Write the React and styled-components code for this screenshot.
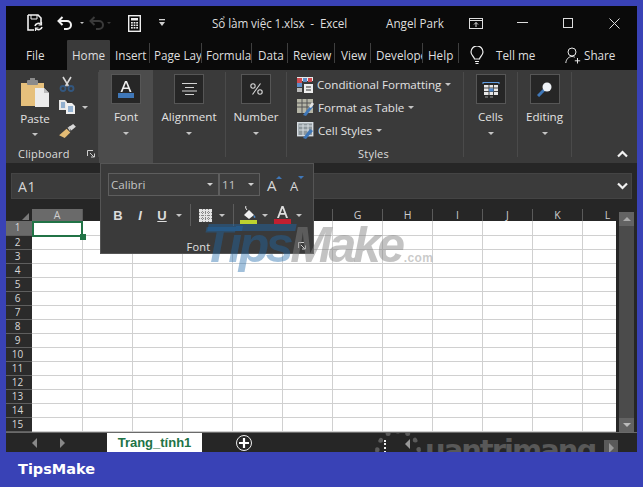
import React from "react";
import styled, { createGlobalStyle } from "styled-components";

const Global = createGlobalStyle`
  html, body { margin: 0; padding: 0; background: #3942b6; }
  body { width: 643px; height: 487px; overflow: hidden; font-family: "Open Sans", "Noto Sans", sans-serif; }
  * { box-sizing: border-box; }
`;

const Page = styled.div`
  width: 643px; height: 487px; background: #3942b6; padding: 6px 6px 0;
  display: flex; flex-direction: column;
`;
const Window = styled.div`
  position: relative; width: 631px; height: 446px; background: #262626;
  display: flex; flex-direction: column; color: #e6e6e6; overflow: hidden;
`;
const Circuit = styled.svg`position: absolute; left: 0; top: 0; pointer-events: none;`;
const TitleBar = styled.div`
  position: relative; height: 34px; flex: none; background: #0a0a0a; display: flex; align-items: center;
  font-size: 11.7px; color: #dedede;
`;
const Qat = styled.div`display: flex; flex: none; align-items: center; position: relative; padding-left: 21px; width: 206px;`;
const QatSlot = styled.div`width: ${p => p.$w}px; height: 20px; display: flex; align-items: center; justify-content: ${p => p.$j || "flex-start"};`;
const Title = styled.div`position: relative; flex: none; width: 174px; letter-spacing: -0.1px; white-space: pre;`;
const WinUser = styled.div`position: relative; flex: none; width: 83px;`;
const WinButtons = styled.div`position: relative; flex: none; display: flex; align-items: center;`;
const WinBtn = styled.div`width: 46px; display: flex; justify-content: center; align-items: center; margin-left: ${p => p.$m || 0}px;`;

const Tabs = styled.div`
  position: relative; height: 30px; flex: none; background: #0a0a0a; display: flex; align-items: stretch; font-size: 11.7px; color: #dedede;
`;
const FileTab = styled.div`width: 61px; padding-left: 20px; display: flex; align-items: center;`;
const HomeTab = styled.div`width: 43px; background: #3a3a3a; display: flex; align-items: center; justify-content: center; border-radius: 1px 1px 0 0;`;
const TabItem = styled.div`
  width: ${p => p.$w}px; overflow: hidden; white-space: nowrap; padding-left: ${p => p.$p || 4}px;
  display: flex; align-items: center; position: relative;
  &::after { content: ""; position: absolute; right: 0; top: 3px; bottom: 7px; width: 1px; background: #3f3f3f; }
`;
const TellMe = styled.div`display: flex; align-items: center; margin-left: 11px; width: 95px; gap: 12px;`;
const Share = styled.div`display: flex; align-items: center; gap: 3px;`;

const Ribbon = styled.div`height: 93px; flex: none; background: #3a3a3a; display: flex; align-items: stretch; font-size: 11.6px; color: #e2e2e2;`;
const Sep = styled.div`width: 1px; flex: none; background: #4a4a4a; margin: 2px 0 6px;`;
const Group = styled.div`
  width: ${p => p.$w}px; flex: none; display: flex; flex-direction: column; align-items: center;
  background: ${p => p.$active ? "#4c4c4c" : "transparent"};
`;
const IconBox = styled.div`
  width: 30px; height: 30px; margin-top: 4px; background: #262626; border: 1px solid #565656;
  display: flex; align-items: center; justify-content: center;
`;
const BigLabel = styled.div`height: 18px; line-height: 18px; margin-top: 4px;`;
const Caret = styled.span`
  display: inline-block; width: 0; height: 0; flex: none;
  border-left: ${p => p.$s || 3}px solid transparent; border-right: ${p => p.$s || 3}px solid transparent;
  border-top: ${p => p.$s || 3}px solid ${p => p.$c || "#c4c4c4"};
`;
const CaretRow = styled.div`height: 10px; display: flex; align-items: center; justify-content: center; margin-top: ${p => p.$m ?? 2}px;`;
const ClipGroup = styled.div`width: 92px; flex: none; display: flex; flex-direction: column;`;
const ClipBody = styled.div`flex: 1; min-height: 0; display: flex; padding-left: 6px;`;
const PasteCol = styled.div`width: 46px; display: flex; flex-direction: column; align-items: center; padding-top: 8px;`;
const PasteLabel = styled.div`height: 18px; line-height: 18px; margin-top: 2px;`;
const SmallCol = styled.div`display: flex; flex-direction: column; padding-top: 2px; margin-left: 1px;`;
const SmallRow = styled.div`height: 23.5px; display: flex; align-items: center; gap: 7px;`;
const GroupLabel = styled.div`height: 18px; flex: none; line-height: 18px; font-size: 11px; letter-spacing: .2px; display: flex; align-items: center; color: #dcdcdc;`;
const ClipLabel = styled(GroupLabel)`padding-left: 12px; gap: 17px;`;
const StyleGroup = styled.div`width: 176px; flex: none; display: flex; flex-direction: column;`;
const StyleList = styled.div`flex: 1; padding: 3px 0 0 10px;`;
const StyleItem = styled.div`height: 23px; display: flex; align-items: center; gap: 4px; white-space: nowrap;`;
const StyleCaption = styled(GroupLabel)`justify-content: center; margin-left: -3px;`;
const Rest = styled.div`flex: 1; display: flex; align-items: flex-end; justify-content: flex-end; padding: 0 9px 5px 0;`;

const Band = styled.div`height: 10px; flex: none; background: #262626;`;
const FormulaBar = styled.div`
  height: 26px; flex: none; margin: 0 5px; background: #3b3b3b; border: 1px solid #444;
  display: flex; align-items: center; justify-content: space-between; padding: 0 3px 0 6px;
  font-size: 14px; letter-spacing: .6px; color: #d6d6d6;
`;
const Sheet = styled.div`position: relative; flex: none; margin-top: 10px; height: 223px; display: flex;`;
const SheetMain = styled.div`width: 610px; display: flex; flex-direction: column;`;
const HeaderRow = styled.div`height: 12px; display: flex; flex: none; font-size: 10.5px; color: #cfcfcf;`;
const Corner = styled.div`width: 26px; flex: none; display: flex; align-items: flex-end; justify-content: flex-end; padding: 0 3px 1px 0;`;
const ColHeads = styled.div`width: 584px; display: flex; overflow: hidden;`;
const ColHead = styled.div`
  width: 50px; flex: none; text-align: center; line-height: 12px; border-right: 1px solid #5a5a5a;
  background: ${p => p.$on ? "#6a6a6a" : "transparent"};
  &:first-child { width: 51px; }
`;
const Row = styled.div`height: ${p => p.$first ? 15 : 14}px; display: flex; flex: none;`;
const RowHead = styled.div`
  width: 26px; flex: none; text-align: center; font-size: 10px; line-height: 13px; padding-right: 3px;
  border-bottom: 1px solid #5f5f5f; color: #d8d8d8; background: ${p => p.$on ? "#6a6a6a" : "#2b2b2b"};
`;
const Cells = styled.div`width: 584px; display: flex; overflow: hidden; background: #fff;`;
const Cell = styled.div`
  width: 50px; flex: none; border-right: 1px solid #d0d0d0; border-bottom: 1px solid #d0d0d0;
  &:first-child { width: 51px; }
`;
const Selected = styled.div`
  position: absolute; left: 26px; top: 12px; width: 51px; height: 16px; border: 2px solid #217346; z-index: 2;
`;
const Handle = styled.div`position: absolute; right: -5px; bottom: -5px; width: 6px; height: 6px; background: #217346;`;
const Scrollbar = styled.div`width: 15px; margin: 3px 0 0 3px; flex: none; display: flex; flex-direction: column; background: #4b4b4b;`;
const ScrollBtn = styled.div`height: 14px; flex: none; background: #636363; display: flex; align-items: center; justify-content: center;`;
const ScrollTrack = styled.div`flex: 1;`;
const ArrowUp = styled.span`width: 0; height: 0; border: 4px solid transparent; border-top: 0; border-bottom: 4px solid #aaa;`;
const ArrowDown = styled.span`width: 0; height: 0; border: 4px solid transparent; border-bottom: 0; border-top: 4px solid #bbb;`;

const SheetBar = styled.div`
  position: relative; flex: 1; background: #262626; border-top: 1px solid #6a6a6a; display: flex; align-items: center; overflow: hidden;
`;
const NavGroup = styled.div`width: 101px; padding-left: 26px; display: flex; gap: 23px; align-items: center;`;
const ArrowLeft = styled.span`width: 0; height: 0; flex: none; border: 5px solid transparent; border-left: 0; border-right: 5px solid ${p => p.$c || "#888"};`;
const ArrowRight = styled.span`width: 0; height: 0; flex: none; border: 5px solid transparent; border-right: 0; border-left: 5px solid ${p => p.$c || "#888"};`;
const SheetTab = styled.div`
  width: 95px; height: 21px; margin-top: -1px; background: #fff; color: #217346; font-weight: 700; font-size: 13px;
  display: flex; align-items: center; justify-content: center; font-family: "Liberation Sans", sans-serif;
`;
const AddSheet = styled.div`
  width: 16px; height: 16px; margin-left: 34px; border: 1.5px solid #eee; border-radius: 50%; color: #fff;
  display: flex; align-items: center; justify-content: center;
`;
const QWater = styled.div`
  position: absolute; left: 369px; top: 1px; width: 240px; height: 30px; display: flex; align-items: flex-start;
  color: #585858; font: 700 29px/32px "DejaVu Sans", sans-serif; letter-spacing: -2px;
`;
const QRing = styled.div`width: 46px; height: 46px; margin: -5px 4px 0 0; border: 5px dotted #5b5b5b; border-radius: 50%; flex: none;`;
const Dots = styled.div`position: absolute; left: 378px; top: 7px; width: 2px; height: 13px; border-left: 2px dotted #eee;`;
const BarArrow = styled.div`position: absolute; top: ${p => p.$t}px; left: ${p => p.$l}px; width: 14px; height: 15px; background: ${p => p.$bg || "#5a5a5a"}; display: flex; align-items: center; justify-content: center;`;

const Panel = styled.div`
  position: absolute; left: 94px; top: 157px; width: 214px; height: 91px; background: #3a3a3a; border: 1px solid #555;
  display: flex; flex-direction: column; z-index: 5; font-size: 11.6px; color: #e0e0e0;
`;
const PanelRow1 = styled.div`display: flex; align-items: center; margin: 9px 0 0 7px;`;
const FontSelect = styled.div`
  height: 23px; width: ${p => p.$w}px; border: 1px solid #5e5e5e; display: flex; align-items: center; justify-content: space-between;
  padding: 0 5px 0 2px; color: #c4c4c4; margin-right: ${p => p.$m || 0}px; background: #3e3e3e;
`;
const SizeBtn = styled.div`width: 22px; display: flex; justify-content: center; position: relative;`;
const PanelRow2 = styled.div`display: flex; align-items: center; height: 24px; margin: 7px 0 0 6px;`;
const Tool = styled.div`
  width: ${p => p.$w}px; height: 24px; flex: none; display: flex; align-items: center; justify-content: center;
  font: ${p => p.$font || "700 13px"} "Liberation Sans", sans-serif; color: #dcdcdc; text-decoration: ${p => p.$u ? "underline" : "none"};
`;
const ToolSep = styled.div`width: 10px; height: 22px; flex: none; display: flex; justify-content: center; &::before { content: ""; width: 1px; background: #5c5c5c; }`;
const PanelFoot = styled.div`margin-top: auto; height: 14px; display: flex; align-items: center; margin-bottom: 0;`;
const PanelCaption = styled.div`width: 195px; text-align: center; font-size: 11px; letter-spacing: .2px;`;
const Launcher = styled.div`margin-left: 2px; display: flex;`;

const Water = styled.div`
  position: absolute; left: 196px; top: 209px; z-index: 7; pointer-events: none; white-space: nowrap;
  font: italic 700 50px/60px "Liberation Sans", sans-serif; letter-spacing: -3.4px;
  display: flex; align-items: baseline;
`;
const WaterBar = styled.div`position: absolute; left: 6px; top: 9px; width: 88px; height: 7px; background: rgba(31,104,170,.45); transform: skewX(-12deg);`;
const WaterTips = styled.span`color: rgba(31,104,170,.42);`;
const WaterMake = styled.span`color: rgba(130,130,130,.48);`;
const WaterCom = styled.span`color: rgba(150,150,150,.5); font: 700 12px "Liberation Sans", sans-serif; letter-spacing: .4px; margin-left: 2px;`;

const Footer = styled.div`flex: 1; display: flex; align-items: center; padding: 0 0 2px 12px; color: #fff; font: 700 14.5px "DejaVu Sans", sans-serif;`;

/* icons */
const Save = () => (
  <svg width="17" height="18" viewBox="0 0 17 18" fill="none" stroke="#f2f2f2" strokeWidth="1.6">
    <path d="M1 1h10l3 3v5M1 1v15h6" />
    <path d="M4 1v4h6V1" strokeWidth="1" />
    <path d="M8 12a3.5 3.5 0 0 1 6-1.5M15 13a3.5 3.5 0 0 1-6 1.5" />
    <path d="M14.5 8v3h-3M8.5 17v-3h3" strokeWidth="1.2" />
  </svg>
);
const Undo = ({ c }) => (
  <svg width="16" height="14" viewBox="0 0 16 14" fill="none" stroke={c} strokeWidth="2">
    <path d="M5.5 1 1.5 5l4 4" /><path d="M2 5h8a4 4 0 0 1 4 4 4 4 0 0 1-4 4H7" />
  </svg>
);
const Calc = () => (
  <svg width="13" height="17" viewBox="0 0 13 17">
    <rect x=".7" y=".7" width="11.6" height="15.6" fill="none" stroke="#eee" strokeWidth="1.4" />
    <rect x="3" y="3" width="7" height="2.5" fill="#eee" />
    {[7, 9.5, 12].flatMap(y => [3, 5.6, 8.2].map(x => <rect key={x + "" + y} x={x} y={y} width="1.8" height="1.6" fill="#eee" />))}
  </svg>
);
const Customize = () => (
  <svg width="8" height="8" viewBox="0 0 8 8" fill="#cfcfcf"><rect x="1" y="0" width="6" height="1.3" /><path d="M1 3h6L4 7z" /></svg>
);
const RibbonDisplay = () => (
  <svg width="14" height="11" viewBox="0 0 14 11" fill="none" stroke="#ddd"><rect x=".5" y=".5" width="13" height="10" /><path d="M.5 2.500h13M7 9V4.500M5 6.500l2-2 2 2" /></svg>
);
const Bulb = () => (
  <svg width="14" height="19" viewBox="0 0 14 19" fill="none" stroke="#eee" strokeWidth="1.2"><path d="M4.500 13c0-2-3.500-3.500-3.500-7a6 6 0 0 1 12 0c0 3.500-3.500 5-3.500 7z" /><path d="M5 15.500h4M5.500 17.500h3" /></svg>
);
const Person = () => (
  <svg width="16" height="17" viewBox="0 0 16 17" fill="none" stroke="#e6e6e6" strokeWidth="1"><circle cx="7" cy="5" r="4" /><path d="M.8 16c.4-4 3-6.500 6.200-6.500 1 0 2 .2 2.800.7M12.500 11v5.500M9.800 13.800h5.400" /></svg>
);
const Paste = () => (
  <svg width="30" height="30" viewBox="0 0 30 30">
    <path d="M1 5h23v23H1z" fill="#e6c07c" />
    <rect x="7" y="2" width="11" height="5" rx="1" fill="#8b8b8b" /><rect x="10" y="0" width="5" height="3" fill="#8b8b8b" />
    <path d="M15 10h9l5 5v14H15z" fill="#ececec" /><path d="M24 10v5h5" fill="#bdbdbd" />
  </svg>
);
const Cut = () => (
  <svg width="16" height="16" viewBox="0 0 16 16" fill="none">
    <path d="M4 1l6 10M12 1 6 11" stroke="#d8d8d8" strokeWidth="1.6" />
    <circle cx="4" cy="12.500" r="2.500" stroke="#33577f" strokeWidth="1.800" /><circle cx="12" cy="12.500" r="2.500" stroke="#33577f" strokeWidth="1.800" />
  </svg>
);
const Copy = () => (
  <svg width="16" height="14" viewBox="0 0 16 14">
    <path d="M0 0h6l2 2v8H0z" fill="#e8e8e8" /><path d="M2 3h4M2 5h4M2 7h4" stroke="#3a76b5" />
    <path d="M7 3h6l3 3v8H7z" fill="#f0f0f0" /><path d="M9 7h5M9 9h5M9 11h5" stroke="#3a76b5" />
  </svg>
);
const Painter = () => (
  <svg width="17" height="14" viewBox="0 0 18 15">
    <path d="M0 12 8 5l4 4-6 6z" fill="#e3bb75" /><path d="M9 4l3-2 2 2-2 2 0 2z" fill="#c8c8c8" /><path d="M11 3l4-3 3 3-5 4z" fill="#d9d9d9" />
  </svg>
);
const LauncherIcon = () => (
  <svg width="8" height="8" viewBox="0 0 8 8" fill="none" stroke="#cfcfcf"><path d="M.5 6V.5H6" /><path d="M3 3l4 4M4 7h3.500V3.500" /></svg>
);
const FontA = () => (
  <svg width="16" height="18" viewBox="0 0 16 18"><path d="M2.500 12 7 1h2l4.500 11h-1.900l-1.100-3H5.500l-1.100 3zM6.100 7.500h3.800L8 2.800z" fill="#eee" /><rect x="0" y="13" width="16" height="5" fill="#3f77b8" /></svg>
);
const Align = () => (
  <svg width="15" height="12" viewBox="0 0 15 12" stroke="#d4d4d4"><path d="M0 .5h15M3 4.500h9M0 8h15M3 11.500h9" /></svg>
);
const Percent = () => (
  <svg width="13" height="12" viewBox="0 0 13 12" fill="none" stroke="#d8d8d8" strokeWidth="1.100"><circle cx="3" cy="3" r="2.200" /><circle cx="10" cy="9" r="2.200" /><path d="M10.500.5 2.500 11.500" /></svg>
);
const CellsI = () => (
  <svg width="18" height="17" viewBox="0 0 18 17">
    <path d="M1 1.500h16M1 1v2M17 1v2" stroke="#5f9be0" fill="none" /><rect x="2" y="4" width="14" height="10" fill="#e8e8e8" />
    <path d="M2 7h14M2 10.500h14M7 4v10M11.500 4v10" stroke="#444" /><rect x="7" y="7.500" width="4.500" height="3" fill="#4d86cc" /><path d="M3 16h3M8 16h3" stroke="#9a9a9a" />
  </svg>
);
const Find = () => (
  <svg width="16" height="16" viewBox="0 0 16 16"><path d="M1 15l6-6" stroke="#3f77b8" strokeWidth="3" /><circle cx="10" cy="6" r="4.500" fill="#eef2f6" /></svg>
);
const CondF = () => (
  <svg width="16" height="16" viewBox="0 0 16 16">
    <rect x="0" y="0" width="16" height="4" fill="#e8e8e8" /><rect x="0" y="1" width="5" height="5" fill="#d0494f" /><rect x="6" y="1" width="4" height="4" fill="#5f8dc8" /><rect x="11" y="1" width="4" height="4" fill="#d0494f" />
    <rect x="0" y="6" width="5" height="4" fill="#5f8dc8" /><rect x="0" y="11" width="5" height="4" fill="#bbb" /><rect x="7" y="7" width="9" height="9" fill="#eee" /><path d="M9 10h5M9 13h5" stroke="#333" strokeWidth="1.200" />
  </svg>
);
const TableF = () => (
  <svg width="17" height="17" viewBox="0 0 17 17">
    <rect x="0" y="0" width="16" height="14" fill="#b5b5a6" /><path d="M0 4h16M0 8h16M5 0v14M10 0v14" stroke="#555" /><path d="M6 16l8-10 2 2-7 9z" fill="#3f77b8" /><path d="M12 8l3-5 2 2-3 4z" fill="#e6e6e6" />
  </svg>
);
const CellSt = () => (
  <svg width="17" height="17" viewBox="0 0 17 17">
    <rect x=".7" y=".7" width="15" height="13" fill="#8d979c" stroke="#d6dde2" strokeWidth="1.400" /><path d="M2 4h13M2 8h10M6 2v11M11 2v8" stroke="#d6dde2" /><path d="M6 16l7-9 3 2-7 8z" fill="#3f77b8" />
  </svg>
);
const Chevron = ({ up }) => (
  <svg width="11" height="8" viewBox="0 0 11 8" fill="none" stroke="#f2f2f2" strokeWidth="2.200"><path d={up ? "M1 6.500 5.500 2 10 6.500" : "M1 1.500 5.500 6 10 1.500"} /></svg>
);
const Grow = ({ big }) => (
  <svg width="22" height="18" viewBox="0 0 22 18">
    <text x={big ? 6 : 7} y="15" fontFamily="Open Sans, sans-serif" fontSize={big ? 15 : 13} fill="#d8d8d8">A</text>
    <path d={big ? "M15 3l3-3 3 3z" : "M15 0h6l-3 3z"} fill="#3f77b8" />
  </svg>
);
const BordersI = () => (
  <svg width="13" height="13" viewBox="0 0 13 13"><rect width="13" height="13" fill="#e4e4e4" /><path d="M0 3.500h13M0 6.500h13M0 9.500h13M3.500 0v13M6.500 0v13M9.500 0v13" stroke="#888" strokeDasharray="1 1" /></svg>
);
const Fill = () => (
  <svg width="18" height="18" viewBox="0 0 18 18">
    <path d="M4 9l5-5 5 5-5 4z" fill="#efefef" /><path d="M6 0c-1 1 0 3 1 4" stroke="#eee" fill="none" /><path d="M14 9c1 1 2 2 1 3-1 0-2-1-1-3z" fill="#4a8bd0" /><rect y="14" width="17" height="4" fill="#bdd22e" />
  </svg>
);
const ColorA = () => (
  <svg width="17" height="18" viewBox="0 0 17 18"><path d="M3 12 7.500 0h2L14 12h-2l-1.100-3.200H6.100L5 12zM6.800 6.900h3.400L8.500 2.400z" fill="#dedede" /><rect y="13" width="17" height="5" fill="#c01f30" /></svg>
);
const Plus = () => (
  <svg width="10" height="10" viewBox="0 0 10 10" stroke="#fff" strokeWidth="2.200"><path d="M5 0v10M0 5h10" /></svg>
);
const TriCorner = () => (
  <svg width="7" height="7" viewBox="0 0 7 7"><path d="M7 0v7H0z" fill="#7a7a7a" /></svg>
);

const COLS = "ABCDEFGHIJKL".split("");
const ROWS = Array.from({ length: 15 }, (_, i) => i + 1);
const TABS = [
  ["Insert", 40, 5], ["Page Layout", 52, 4], ["Formulas", 50, 4], ["Data", 36, 6],
  ["Review", 47, 5], ["View", 36, 6], ["Developer", 52, 5], ["Help", 36, 5],
];

const Big = ({ w, active, label, children }) => (
  <Group $w={w} $active={active}>
    <IconBox>{children}</IconBox>
    <BigLabel>{label}</BigLabel>
    <CaretRow><Caret /></CaretRow>
  </Group>
);

export default function App() {
  return (
    <Page>
      <Global />
      <Window>
        <Circuit width="631" height="64" viewBox="0 0 631 64" fill="none" stroke="#222" strokeWidth="1.500">
          <circle cx="159" cy="36" r="17" /><path d="M152 29l12 12M152 29v8M152 29h8" />
          <circle cx="145" cy="15" r="3" /><path d="M148 15h200" />
          <circle cx="204" cy="34" r="4" /><path d="M208 34h95l28 30" />
          <circle cx="411" cy="26" r="30" strokeWidth="6" /><path d="M398 25h26M411 25v22" strokeWidth="5" />
          <path d="M340 12l30 25M470 60h50l30-30h81M570 64l50-58M595 64l36-42" />
        </Circuit>
        <TitleBar>
          <Qat>
            <QatSlot $w={30}><Save /></QatSlot>
            <QatSlot $w={18}><Undo c="#f2f2f2" /></QatSlot>
            <QatSlot $w={14} $j="center"><Caret $s={2.5} /></QatSlot>
            <QatSlot $w={18}><Undo c="#3a3a3a" /></QatSlot>
            <QatSlot $w={21}><Caret $s={2.5} $c="#3a3a3a" /></QatSlot>
            <QatSlot $w={30}><Calc /></QatSlot>
            <Customize />
          </Qat>
          <Title>Sổ làm việc 1.xlsx  -  Excel</Title>
          <WinUser>Angel Park</WinUser>
          <WinButtons>
            <RibbonDisplay />
            <WinBtn $m={16}><svg width="11" height="2"><rect width="11" height="1" fill="#ddd" /></svg></WinBtn>
            <WinBtn><svg width="10" height="10" fill="none" stroke="#ddd"><rect x=".5" y=".5" width="9" height="9" /></svg></WinBtn>
            <WinBtn><svg width="11" height="11" stroke="#ddd"><path d="M.5.5l10 10M10.500.5l-10 10" /></svg></WinBtn>
          </WinButtons>
        </TitleBar>
        <Tabs>
          <FileTab>File</FileTab>
          <HomeTab>Home</HomeTab>
          {TABS.map(([t, w, p]) => <TabItem key={t} $w={w} $p={p}>{t}</TabItem>)}
          <TellMe><Bulb /><span>Tell me</span></TellMe>
          <Share><Person /><span>Share</span></Share>
        </Tabs>
        <Ribbon>
          <ClipGroup>
            <ClipBody>
              <PasteCol>
                <Paste />
                <PasteLabel>Paste</PasteLabel>
                <CaretRow $m={1}><Caret /></CaretRow>
              </PasteCol>
              <SmallCol>
                <SmallRow><Cut /></SmallRow>
                <SmallRow><Copy /><Caret /></SmallRow>
                <SmallRow><Painter /></SmallRow>
              </SmallCol>
            </ClipBody>
            <ClipLabel>Clipboard<LauncherIcon /></ClipLabel>
          </ClipGroup>
          <Sep />
          <Big w={54} active label="Font"><FontA /></Big>
          <Big w={72} label="Alignment"><Align /></Big>
          <Sep />
          <Big w={60} label="Number"><Percent /></Big>
          <Sep />
          <StyleGroup>
            <StyleList>
              <StyleItem><CondF /><span>Conditional Formatting</span><Caret /></StyleItem>
              <StyleItem><TableF /><span>Format as Table</span><Caret /></StyleItem>
              <StyleItem><CellSt /><span>Cell Styles</span><Caret /></StyleItem>
            </StyleList>
            <StyleCaption>Styles</StyleCaption>
          </StyleGroup>
          <Sep />
          <Big w={53} label="Cells"><CellsI /></Big>
          <Sep />
          <Big w={53} label="Editing"><Find /></Big>
          <Sep />
          <Rest><Chevron up /></Rest>
        </Ribbon>
        <Band />
        <FormulaBar>A1<Chevron /></FormulaBar>
        <Sheet>
          <SheetMain>
            <HeaderRow>
              <Corner><TriCorner /></Corner>
              <ColHeads>{COLS.map(c => <ColHead key={c} $on={c === "A"}>{c}</ColHead>)}</ColHeads>
            </HeaderRow>
            {ROWS.map(r => (
              <Row key={r} $first={r === 1}>
                <RowHead $on={r === 1}>{r}</RowHead>
                <Cells>{COLS.map(c => <Cell key={c} />)}</Cells>
              </Row>
            ))}
          </SheetMain>
          <Selected><Handle /></Selected>
          <Scrollbar>
            <ScrollBtn><ArrowUp /></ScrollBtn>
            <ScrollTrack />
            <ScrollBtn><ArrowDown /></ScrollBtn>
          </Scrollbar>
        </Sheet>
        <SheetBar>
          <NavGroup><ArrowLeft /><ArrowRight /></NavGroup>
          <SheetTab>Trang_tính1</SheetTab>
          <AddSheet><Plus /></AddSheet>
          <QWater><QRing />uantrimang</QWater>
          <Dots />
          <BarArrow $l={394} $t={3} $bg="transparent"><ArrowLeft $c="#999" /></BarArrow>
          <BarArrow $l={598} $t={7}><ArrowRight $c="#999" /></BarArrow>
        </SheetBar>

        <Panel>
          <PanelRow1>
            <FontSelect $w={111}>Calibri<Caret $c="#d0d0d0" /></FontSelect>
            <FontSelect $w={41} $m={1}>11<Caret $c="#d0d0d0" /></FontSelect>
            <SizeBtn><Grow big /></SizeBtn>
            <SizeBtn><Grow /></SizeBtn>
          </PanelRow1>
          <PanelRow2>
            <Tool $w={22}>B</Tool>
            <Tool $w={22} $font="italic 700 13px">I</Tool>
            <Tool $w={22} $u>U</Tool>
            <Tool $w={12}><Caret /></Tool>
            <ToolSep />
            <Tool $w={21}><BordersI /></Tool>
            <Tool $w={12}><Caret /></Tool>
            <ToolSep />
            <Tool $w={21}><Fill /></Tool>
            <Tool $w={12}><Caret /></Tool>
            <Tool $w={23}><ColorA /></Tool>
            <Tool $w={10}><Caret /></Tool>
          </PanelRow2>
          <PanelFoot>
            <PanelCaption>Font</PanelCaption>
            <Launcher><LauncherIcon /></Launcher>
          </PanelFoot>
        </Panel>

        <Water>
          <WaterBar />
          <WaterTips>Tips</WaterTips><WaterMake>Make</WaterMake><WaterCom>.com</WaterCom>
        </Water>
      </Window>
      <Footer>TipsMake</Footer>
    </Page>
  );
}
